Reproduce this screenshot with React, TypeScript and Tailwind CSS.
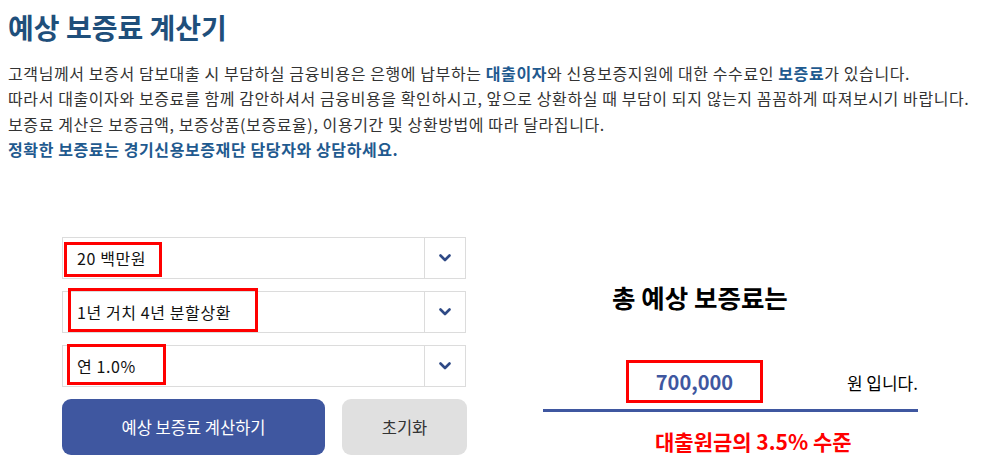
import React from "react";

const font = { fontFamily: '"Noto Sans CJK KR", "Noto Sans", sans-serif' };

function Select({ label, boxW, boxShift, boxTop }: { label: string; boxW: string; boxShift?: string; boxTop?: string }) {
  return (
    <div className="relative flex h-[42px] w-[404px] border border-[#dcdcdc]">
      <div className="flex-1 flex items-center pl-[14px] text-[16px] tracking-[0.6px] text-[#111]">{label}</div>
      <div className="w-[41px] border-l border-[#dcdcdc] flex items-center justify-center">
        <svg width="12" height="8" viewBox="0 0 12 8">
          <path d="M1.5 1.5 L6 6 L10.5 1.5" fill="none" stroke="#2f4a86" strokeWidth="2.6" strokeLinecap="round" strokeLinejoin="round" />
        </svg>
      </div>
      <div className={`absolute border-[3px] border-[#ff0000] ${boxW} ${boxShift ?? ""} ${boxTop ?? ""}`} />
    </div>
  );
}

export default function App() {
  return (
    <div className="w-[984px] h-[469px] bg-white overflow-hidden" style={font}>
      <h1 className="pl-[8px] pt-[8px] text-[28px] leading-[38px] font-semibold text-[#1f4f7b]">예상 보증료 계산기</h1>
      <div className="pl-[8px] mt-[15px] text-[16px] tracking-[0.6px] leading-[25.3px] text-[#333]">
        <p>
          고객님께서 보증서 담보대출 시 부담하실 금융비용은 은행에 납부하는 <b className="text-[#1f5a8f]">대출이자</b>와 신용보증지원에 대한 수수료인 <b className="text-[#1f5a8f]">보증료</b>가 있습니다.
        </p>
        <p>따라서 대출이자와 보증료를 함께 감안하셔서 금융비용을 확인하시고, 앞으로 상환하실 때 부담이 되지 않는지 꼼꼼하게 따져보시기 바랍니다.</p>
        <p>보증료 계산은 보증금액, 보증상품(보증료율), 이용기간 및 상환방법에 따라 달라집니다.</p>
        <p className="font-bold text-[#1f5a8f]">정확한 보증료는 경기신용보증재단 담당자와 상담하세요.</p>
      </div>
      <div className="flex mt-[75px]">
        <div className="ml-[62px] flex flex-col">
          <div className="flex flex-col gap-[12px]">
            <Select label="20 백만원" boxW="w-[98px] h-[35px]" boxShift="left-[1px]" boxTop="top-[4px]" />
            <Select label="1년 거치 4년 분할상환" boxW="w-[190px] h-[44px]" boxShift="left-[5px]" boxTop="top-[-4px]" />
            <Select label="연 1.0%" boxW="w-[99px] h-[41px]" boxShift="left-[4px]" boxTop="top-[-2px]" />
          </div>
          <div className="flex mt-[12px] gap-[17px]">
            <button className="w-[263px] h-[56px] rounded-[9px] bg-[#3f57a0] text-white text-[16.5px]">예상 보증료 계산하기</button>
            <button className="w-[125px] h-[56px] rounded-[9px] bg-[#e0e0e0] text-[#333] text-[16.5px]">초기화</button>
          </div>
        </div>
        <div className="ml-[76px] w-[375px] flex flex-col">
          <div className="mt-[43px] ml-[69px] text-[25.5px] leading-[34px] font-bold text-black whitespace-nowrap">총 예상 보증료는</div>
          <div className="mt-[46px] flex items-end">
            <div className="ml-[83px] w-[138px] h-[43px] border-[3px] border-[#ff0000] flex items-center justify-center text-[20px] font-semibold text-[#3f57a0]">700,000</div>
            <div className="ml-[84px] text-[17px] text-black leading-[22px] mb-[9px] whitespace-nowrap">원 입니다.</div>
          </div>
          <div className="mt-[6px] h-[3px] bg-[#3f57a0]" />
          <div className="mt-[15px] ml-[112px] text-[21px] font-bold text-[#ff0000] leading-[28px] whitespace-nowrap">대출원금의 3.5% 수준</div>
        </div>
      </div>
    </div>
  );
}
